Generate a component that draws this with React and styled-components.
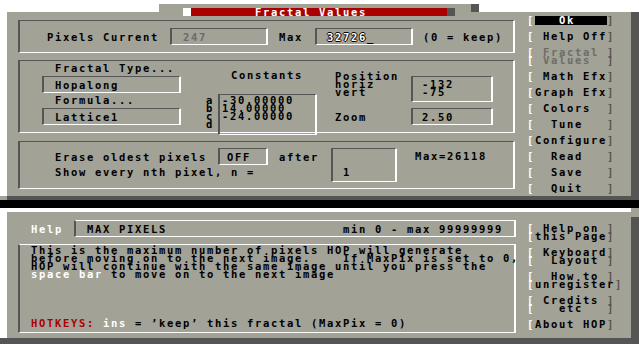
import React from 'react';
import styled, { createGlobalStyle } from 'styled-components';

const GREY = '#a2a296';
const DARK = '#555555';
const RED = '#aa0000';
const DIM = '#6e6e66';

const GlobalStyle = createGlobalStyle`
  html, body {
    margin: 0;
    padding: 0;
    background: #fff;
  }
  body {
    font-family: 'DejaVu Sans Mono', 'Liberation Mono', monospace;
    font-weight: bold;
    font-size: 10.5px;
    letter-spacing: 1.6785px;
    color: #000;
  }
`;

const Screen = styled.div`
  width: 639px;
  height: 344px;
  overflow: hidden;
  display: flex;
  flex-direction: column;
  background: #fff;
`;

// title tab sitting on top of the dialog
const TitleRow = styled.div`
  height: 12px;
  display: flex;
  align-items: flex-end;
  padding-left: 159px;
`;

const TitleTab = styled.div`
  position: relative;
  z-index: 1;
  width: 312px;
  height: 8px;
  background: ${GREY};
  display: flex;
  padding-left: 24px;
  box-sizing: border-box;
`;

const TabShadow = styled.div`
  width: 8px;
  height: 8px;
  background: ${DARK};
`;

const TitleBar = styled.div`
  display: flex;
  margin-top: 4px;
  height: 8px;
`;

const Square = styled.div`
  width: 8px;
  height: 8px;
  background: ${p => p.$c};
`;

const RedBar = styled.div`
  width: 256px;
  height: 8px;
  background: ${RED};
  color: #fff;
  line-height: 8px;
  padding-left: 64px;
  box-sizing: border-box;
  white-space: pre;
`;

const WindowRow = styled.div`
  display: flex;
  padding-left: 7px;
`;

const Window = styled.div`
  width: 624px;
  height: ${p => p.$h}px;
  background: ${GREY};
  display: flex;
  align-items: flex-start;
`;

const SideShadow = styled.div`
  width: 8px;
  background: ${DARK};
  border-top: ${p => p.$gap || 0}px solid ${GREY};
`;

const BottomShadow = styled.div`
  height: ${p => p.$h}px;
  background: ${DARK};
  border-left: ${p => p.$left || 0}px solid ${GREY};
`;

const BlackBand = styled.div`
  height: 8px;
  background: #000;
`;

const WhiteGap = styled.div`
  height: 4px;
  background: #fff;
  border-right: 8px solid ${GREY};
`;

const Column = styled.div`
  display: flex;
  flex-direction: column;
  margin-left: ${p => p.$ml || 0}px;
  margin-top: ${p => p.$mt || 0}px;
`;

const Panel = styled.div`
  box-sizing: border-box;
  width: ${p => p.$w || 497}px;
  height: ${p => p.$h}px;
  margin-top: ${p => p.$mt || 0}px;
  border-top: 1px solid ${p => (p.$light ? '#fff' : DARK)};
  border-left: 2px solid ${DARK};
  border-bottom: 1px solid #fff;
  border-right: 2px solid #fff;
  display: flex;
  align-items: ${p => p.$align || 'flex-start'};
  padding: ${p => p.$pad || '0'};
`;

const Field = styled.div`
  box-sizing: border-box;
  flex-shrink: 0;
  width: ${p => p.$w}px;
  height: ${p => p.$h}px;
  margin-left: ${p => p.$ml || 0}px;
  margin-top: ${p => p.$mt || 0}px;
  border-top: 1px solid ${p => (p.$light ? '#fff' : DARK)};
  border-left: 2px solid ${DARK};
  border-bottom: 1px solid #fff;
  border-right: 2px solid #fff;
  padding: ${p => p.$pad || '0'};
  color: ${p => p.$c || '#000'};
  display: flex;
  flex-direction: ${p => (p.$stack ? 'column' : 'row')};
  align-items: ${p => (p.$stack ? 'flex-start' : 'center')};
  justify-content: ${p => p.$justify || 'flex-start'};
  line-height: 8px;
  white-space: pre;
`;

const Text = styled.div`
  flex-shrink: 0;
  white-space: pre;
  line-height: ${p => p.$lh || 8}px;
  height: ${p => (p.$h ? `${p.$h}px` : 'auto')};
  width: ${p => (p.$w ? `${p.$w}px` : 'auto')};
  margin-left: ${p => p.$ml || 0}px;
  margin-top: ${p => p.$mt || 0}px;
  padding-left: ${p => p.$pl || 0}px;
  padding-top: ${p => p.$pt || 0}px;
  color: ${p => p.$c || '#000'};
`;

const Row = styled.div`
  display: flex;
  align-items: ${p => p.$align || 'center'};
  height: ${p => (p.$h ? `${p.$h}px` : 'auto')};
  margin-top: ${p => p.$mt || 0}px;
  padding-left: ${p => p.$pl || 0}px;
`;

const EditText = styled.span`
  color: #fff;
  text-shadow: 1px 0 #000, -1px 0 #000, 0 1px #000, 0 -1px #000;
`;

const Span = styled.span`
  color: ${p => p.$c};
`;

// menu buttons: [ label ]
const ButtonLine = styled.div`
  display: flex;
  height: ${p => p.$h}px;
  line-height: ${p => p.$h}px;
  white-space: pre;
  align-items: center;
`;

const Bracket = styled.span`
  color: ${p => (p.$open ? '#fff' : DARK)};
`;

const ButtonLabel = styled.span`
  color: ${p => (p.$disabled ? DIM : p.$active ? '#fff' : '#000')};
  background: ${p => (p.$active ? '#000' : 'transparent')};
  line-height: 9px;
  height: 9px;
`;

const ButtonGroup = styled.div`
  display: flex;
  flex-direction: column;
  padding: ${p => p.$pad || 0}px 0;
  margin-top: ${p => p.$mt || 0}px;
`;

function MenuButton({ lines, h = 16, active, disabled }) {
  return lines.map(line => (
    <ButtonLine key={line} $h={lines.length > 1 ? 8 : h}>
      <Bracket $open>[</Bracket>
      <ButtonLabel $active={active} $disabled={disabled}>
        {line}
      </ButtonLabel>
      <Bracket>]</Bracket>
    </ButtonLine>
  ));
}

export default function App() {
  return (
    <Screen>
      <GlobalStyle />
      <TitleRow>
        <TitleTab>
          <TitleBar>
            <Square $c="#fff" />
            <RedBar>Fractal Values</RedBar>
            <Square $c={DARK} />
          </TitleBar>
        </TitleTab>
        <TabShadow />
      </TitleRow>

      <WindowRow>
        <Window $h={184}>
          <Column $ml={11} $mt={8}>
            <Panel $h={33} $align="center" $pad="0 0 0 27px">
              <Text>Pixels Current</Text>
              <Field $w={98} $h={17} $ml={11} $pad="0 0 0 11px" $c="#6a6a6a">
                247
              </Field>
              <Text $ml={11}>Max</Text>
              <Field $w={98} $h={17} $ml={12} $pad="0 0 0 10px">
                <EditText>32726</EditText>_
              </Field>
              <Text $ml={10}>(0 = keep)</Text>
            </Panel>

            <Panel $h={73} $mt={7} $pad="0 0 0 22px">
              <Column>
                <Text $h={15} $lh={15} $pl={13}>Fractal Type...</Text>
                <Field $w={139} $h={17} $pad="0 0 0 11px">Hopalong</Field>
                <Text $h={15} $lh={15} $pl={13}>Formula...</Text>
                <Field $w={139} $h={17} $pad="0 0 0 11px">Lattice1</Field>
              </Column>
              <Column $ml={25}>
                <Text $h={23} $pt={10} $pl={25}>Constants</Text>
                <Row $align="flex-start">
                  <Text $w={12} $mt={2}>{'a\nb\nc\nd'}</Text>
                  <Field $w={99} $h={41} $stack $pad="1px 0 0 2px">
                    <span>-30.00000</span>
                    <span>14.00000</span>
                    <span>-24.00000</span>
                  </Field>
                </Row>
              </Column>
              <Column $ml={18}>
                <Row $align="flex-start" $mt={11}>
                  <Text $w={76}>{'Position\nhoriz\nvert'}</Text>
                  <Field $w={82} $h={26} $mt={4} $stack $pad="3px 0 0 9px">
                    <span>-132</span>
                    <span>-75</span>
                  </Field>
                </Row>
                <Row $mt={6}>
                  <Text $w={76}>Zoom</Text>
                  <Field $w={82} $h={17} $pad="0 0 0 9px">2.50</Field>
                </Row>
              </Column>
            </Panel>

            <Panel $h={48} $mt={8} $pad="6px 0 0 35px">
              <Column>
                <Row $h={17}>
                  <Text>Erase oldest pixels</Text>
                  <Field $w={50} $h={17} $ml={11} $pad="0 0 0 7px">OFF</Field>
                  <Text $ml={11}>after</Text>
                </Row>
                <Text $h={14} $lh={14}>Show every nth pixel, n =</Text>
              </Column>
              <Field $w={66} $h={34} $ml={12} $stack $pad="19px 0 0 10px">
                <span>1</span>
              </Field>
              <Text $ml={18} $mt={4}>Max=26118</Text>
            </Panel>
          </Column>

          <Column $ml={12}>
            <MenuButton lines={['   Ok    ']} active />
            <MenuButton lines={[' Help Off']} />
            <ButtonGroup $pad={4}>
              <MenuButton lines={[' Fractal ', ' Values  ']} disabled />
            </ButtonGroup>
            <MenuButton lines={[' Math Efx']} />
            <MenuButton lines={['Graph Efx']} />
            <MenuButton lines={[' Colors  ']} />
            <MenuButton lines={['  Tune   ']} />
            <MenuButton lines={['Configure']} />
            <MenuButton lines={['  Read   ']} />
            <MenuButton lines={['  Save   ']} />
            <MenuButton lines={['  Quit   ']} />
          </Column>
        </Window>
        <SideShadow />
      </WindowRow>
      <BottomShadow $h={4} $left={7} />
      <BlackBand />
      <WhiteGap />

      <WindowRow>
        <Window $h={126}>
          <Column $ml={11} $mt={8}>
            <Row $h={17} $pl={13}>
              <Text $c="#fff">Help</Text>
              <Field
                $w={442}
                $h={17}
                $ml={11}
                $light
                $justify="space-between"
                $pad="0 11px"
              >
                <span>MAX PIXELS</span>
                <span>min 0 - max 99999999</span>
              </Field>
            </Row>
            <Panel $w={498} $h={89} $mt={7} $light $pad="1px 0 0 11px">
              <Column>
                <Text>
                  {'This is the maximum number of pixels HOP will generate\n' +
                    'before moving on to the next image.    If MaxPix is set to 0,\n' +
                    'HOP will continue with the same image until you press the\n'}
                  <Span $c="#fff">space bar</Span>
                  {' to move on to the next image'}
                </Text>
                <Text $mt={41}>
                  <Span $c={RED}>HOTKEYS:</Span> <Span $c="#fff">ins</Span>
                  {' = ’keep’ this fractal (MaxPix = 0)'}
                </Text>
              </Column>
            </Panel>
          </Column>

          <Column $ml={11} $mt={12}>
            <MenuButton lines={[' Help on ', 'this Page']} />
            <ButtonGroup $mt={8}>
              <MenuButton lines={[' Keyboard', '  Layout ']} />
            </ButtonGroup>
            <ButtonGroup $mt={8}>
              <MenuButton lines={['  How to ', 'unregister']} />
            </ButtonGroup>
            <ButtonGroup $mt={8}>
              <MenuButton lines={[' Credits ', '   etc   ']} />
            </ButtonGroup>
            <ButtonGroup $mt={8}>
              <MenuButton lines={['About HOP']} h={8} />
            </ButtonGroup>
          </Column>
        </Window>
        <SideShadow $gap={5} />
      </WindowRow>
      <BottomShadow $h={6} />
    </Screen>
  );
}
